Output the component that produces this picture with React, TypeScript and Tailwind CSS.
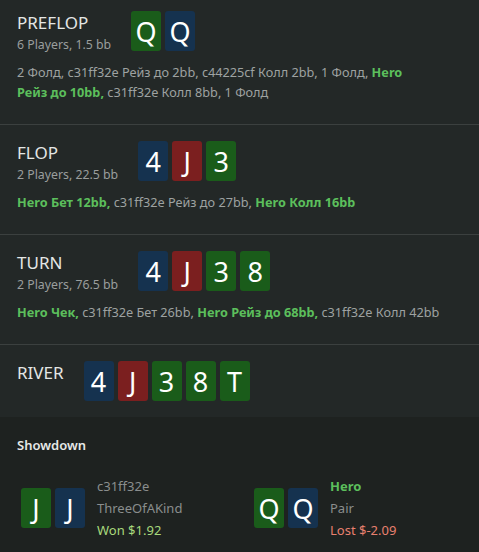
import React from 'react'

type Suit = 'g' | 'b' | 'r'

const cardBg: Record<Suit, string> = {
  g: 'bg-[#1a5c1a]',
  b: 'bg-[#15324f]',
  r: 'bg-[#7b1f1f]',
}

function Card({ rank, suit }: { rank: string; suit: Suit }) {
  return (
    <div
      className={`${cardBg[suit]} w-[30px] h-[40px] rounded-[3px] flex items-center justify-center text-white text-[27px] leading-none`}
    >
      {rank}
    </div>
  )
}

function Cards({ cards }: { cards: [string, Suit][] }) {
  return (
    <div className="flex gap-1">
      {cards.map(([r, s], i) => (
        <Card key={i} rank={r} suit={s} />
      ))}
    </div>
  )
}

type Act = { t: string; hero?: boolean; br?: string }

function Actions({ items }: { items: Act[] }) {
  return (
    <p className="mt-[7px] text-[12.7px] leading-[20px] text-[#9ea2a1]">
      {items.map((a, i) => (
        <React.Fragment key={i}>
          {a.hero ? (
            <span className="font-bold text-[#5cbf5c]">
              {a.br ? (
                <>
                  {a.br}
                  <br />
                  {a.t}
                </>
              ) : (
                a.t
              )}
            </span>
          ) : (
            <span>{a.t}</span>
          )}
          {i < items.length - 1 ? ' ' : ''}
        </React.Fragment>
      ))}
    </p>
  )
}

function Street({
  name,
  sub,
  cards,
  actions,
  className,
}: {
  name: string
  sub?: string
  cards: [string, Suit][]
  actions?: Act[]
  className: string
}) {
  return (
    <section className={`px-[17px] ${className}`}>
      <div className="flex items-start gap-5">
        <div>
          <div className="text-[17px] leading-[24px] text-[#e4e6e5]">{name}</div>
          {sub && <div className="text-[12.3px] leading-[20px] text-[#9a9e9d]">{sub}</div>}
        </div>
        <Cards cards={cards} />
      </div>
      {actions && <Actions items={actions} />}
    </section>
  )
}

export default function App() {
  return (
    <div
      className="w-[479px] h-[552px] overflow-hidden bg-[#232827]"
      style={{ fontFamily: '"Segoe UI", "Noto Sans", sans-serif' }}
    >
      <Street
        name="PREFLOP"
        sub="6 Players, 1.5 bb"
        cards={[['Q', 'g'], ['Q', 'b']]}
        className="pt-[11px] pb-[22px] border-b border-[#3b403f]"
        actions={[
          { t: '2 Фолд,' },
          { t: 'c31ff32e Рейз до 2bb,' },
          { t: 'c44225cf Колл 2bb,' },
          { t: '1 Фолд,' },
          { br: 'Hero', t: 'Рейз до 10bb,', hero: true },
          { t: 'c31ff32e Колл 8bb,' },
          { t: '1 Фолд' },
        ]}
      />
      <Street
        name="FLOP"
        sub="2 Players, 22.5 bb"
        cards={[['4', 'b'], ['J', 'r'], ['3', 'g']]}
        className="pt-4 pb-[22px] border-b border-[#3b403f]"
        actions={[
          { t: 'Hero Бет 12bb,', hero: true },
          { t: 'c31ff32e Рейз до 27bb,' },
          { t: 'Hero Колл 16bb', hero: true },
        ]}
      />
      <Street
        name="TURN"
        sub="2 Players, 76.5 bb"
        cards={[['4', 'b'], ['J', 'r'], ['3', 'g'], ['8', 'g']]}
        className="pt-4 pb-[22px] border-b border-[#3b403f]"
        actions={[
          { t: 'Hero Чек,', hero: true },
          { t: 'c31ff32e Бет 26bb,' },
          { t: 'Hero Рейз до 68bb,', hero: true },
          { t: 'c31ff32e Колл 42bb' },
        ]}
      />
      <Street
        name="RIVER"
        cards={[['4', 'b'], ['J', 'r'], ['3', 'g'], ['8', 'g'], ['T', 'g']]}
        className="pt-4 pb-4"
      />
      <div className="bg-[#1e2220] pt-[18px] pb-6">
        <div className="px-[17px] text-[13px] leading-[20px] font-semibold text-[#e6e8e7]">Showdown</div>
        <div className="mt-5 flex px-[21px]">
          <div className="w-[233px] flex items-center gap-3">
            <Cards cards={[['J', 'g'], ['J', 'b']]} />
            <div className="text-[13px] leading-[22px]">
              <div className="text-[#8a8e8d]">c31ff32e</div>
              <div className="text-[#8a8e8d]">ThreeOfAKind</div>
              <div className="text-[#a8d97c]">Won $1.92</div>
            </div>
          </div>
          <div className="flex items-center gap-3">
            <Cards cards={[['Q', 'g'], ['Q', 'b']]} />
            <div className="text-[13px] leading-[22px]">
              <div className="font-bold text-[#5cbf5c]">Hero</div>
              <div className="text-[#8a8e8d]">Pair</div>
              <div className="text-[#e8806f]">Lost $-2.09</div>
            </div>
          </div>
        </div>
      </div>
    </div>
  )
}
